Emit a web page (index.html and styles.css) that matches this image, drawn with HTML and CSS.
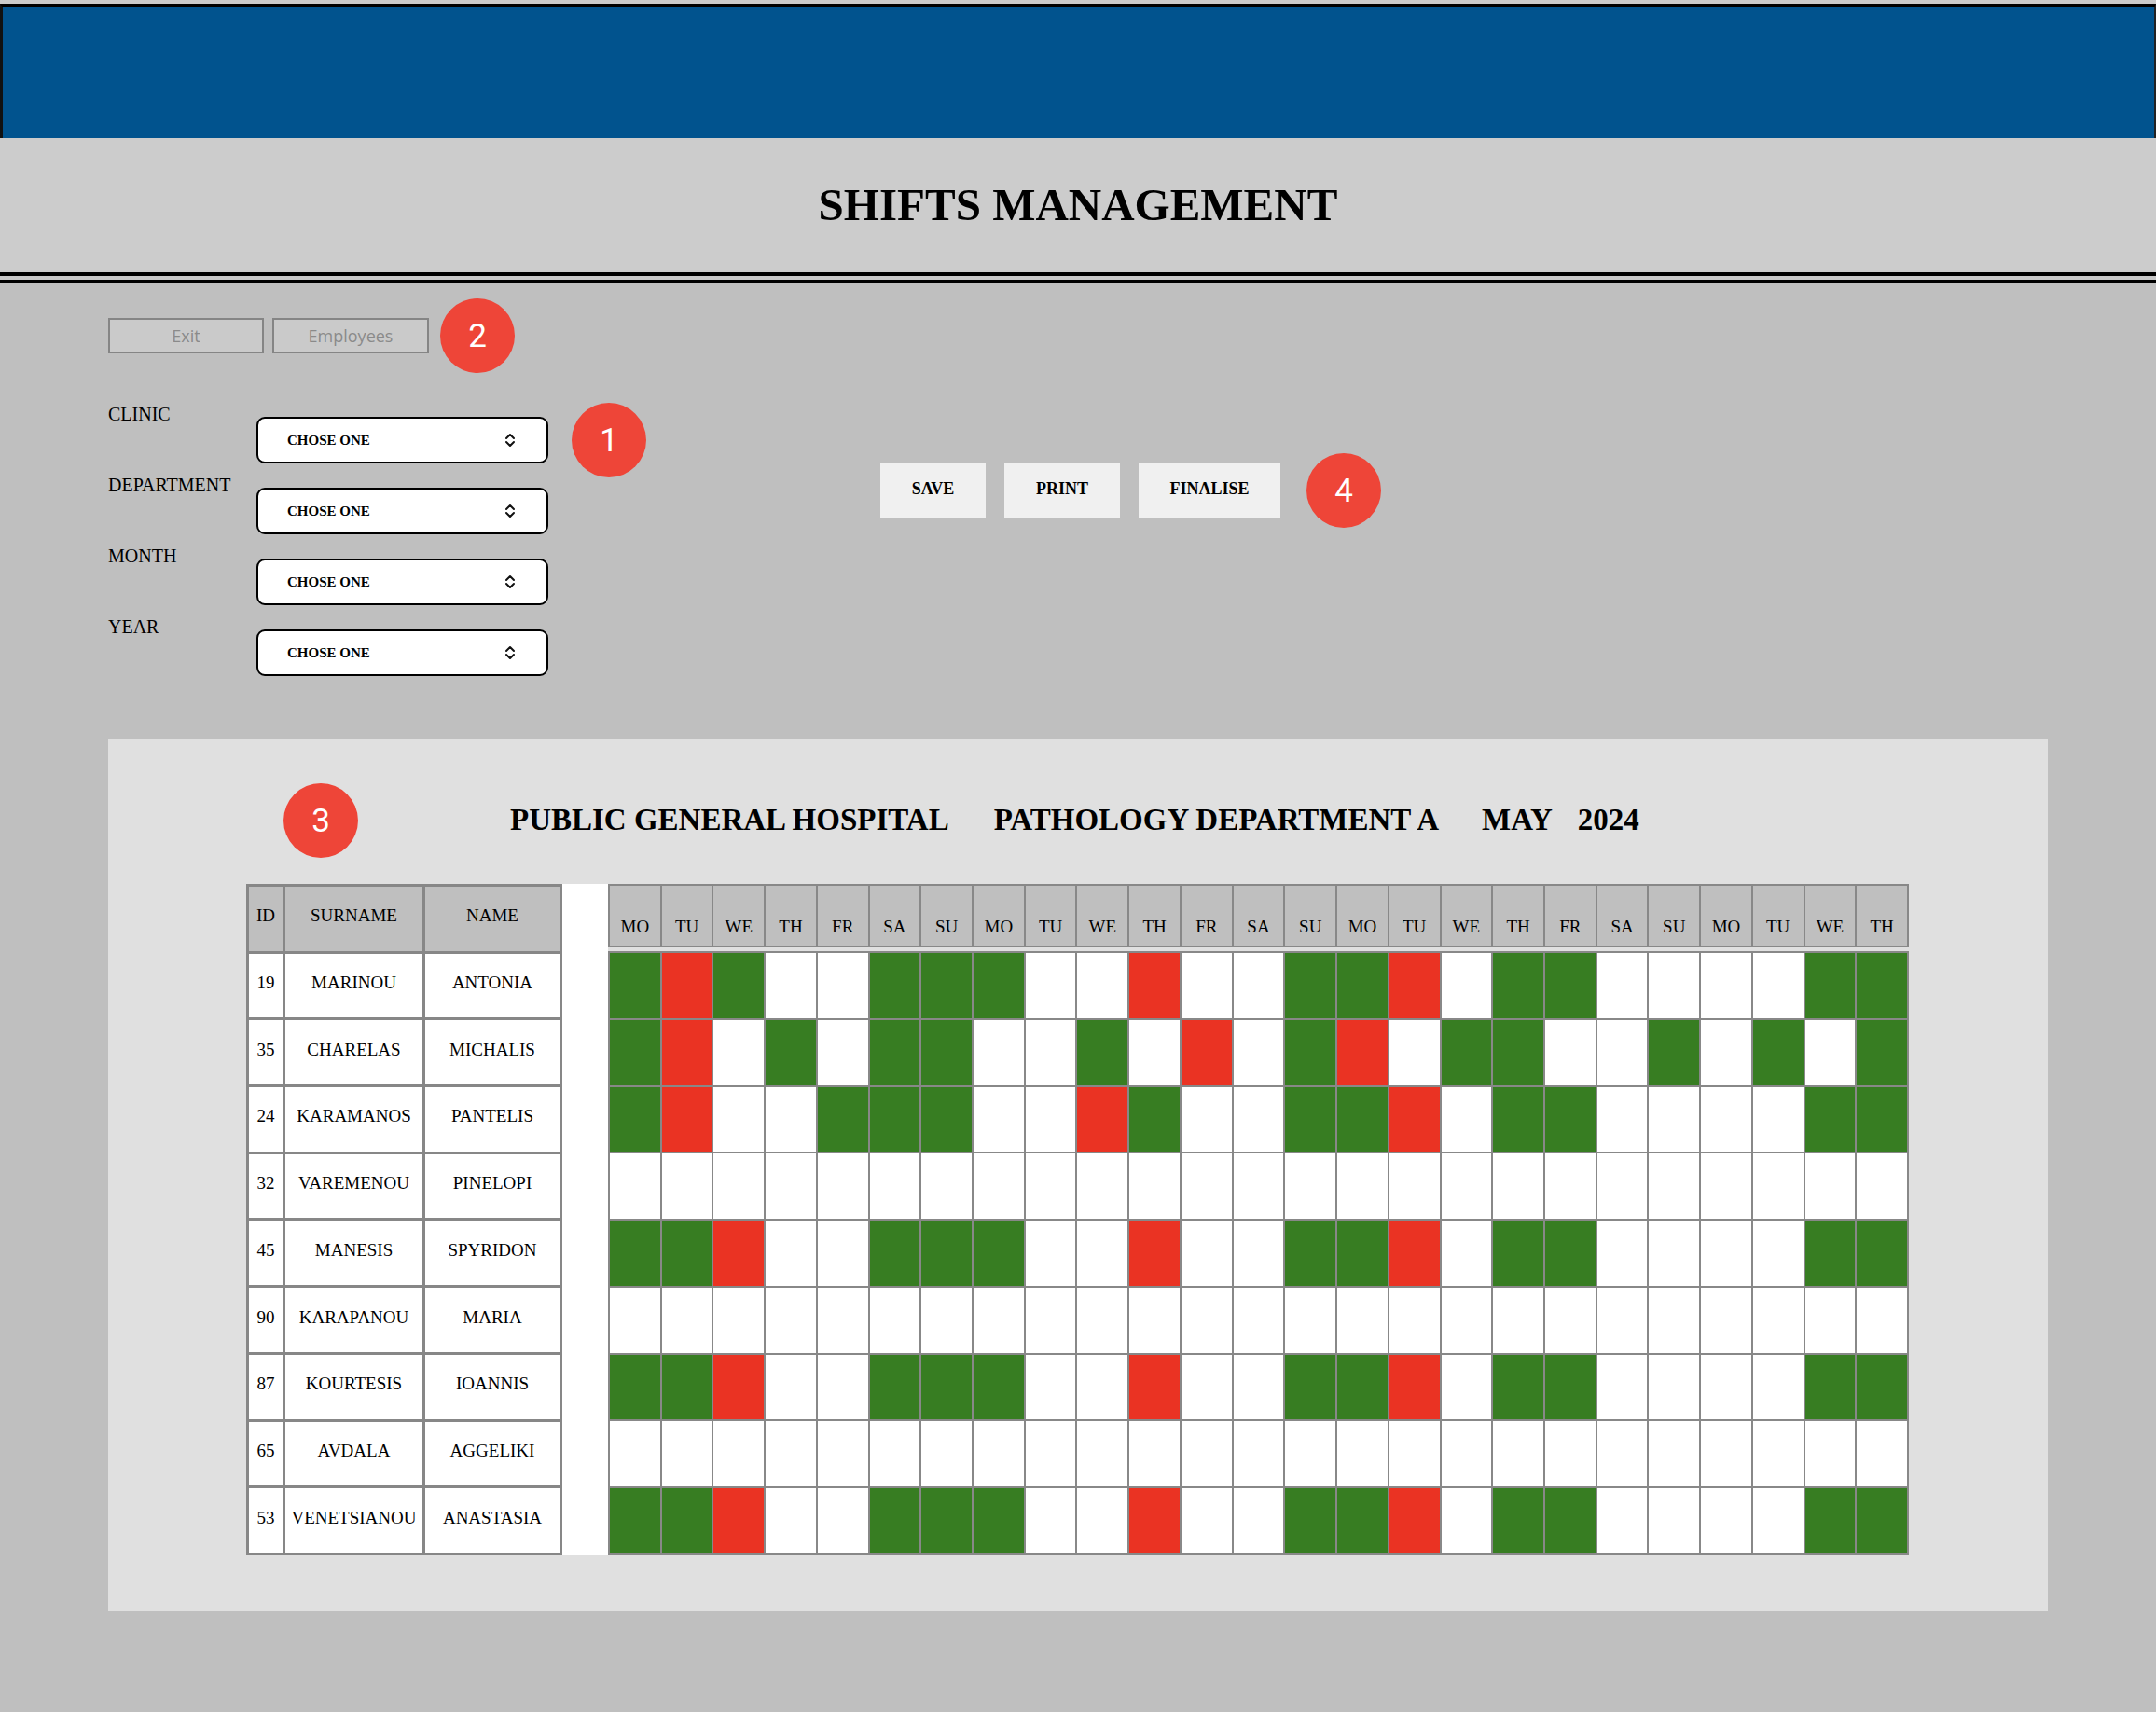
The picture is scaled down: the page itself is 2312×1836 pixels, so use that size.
FILE: index.html
```html
<!DOCTYPE html>
<html lang="en">
<head>
<meta charset="utf-8">
<title>Shifts Management</title>
<link rel="stylesheet" href="styles.css">
</head>
<body>
<header class="topbar"><div class="blue"></div></header>
<div class="titleband"><h1>SHIFTS MANAGEMENT</h1></div>
<div class="rule"></div>

<main class="controls">
  <div class="navrow">
    <button class="ghost exit">Exit</button>
    <button class="ghost emp">Employees</button>
    <span class="badge nav-badge">2</span>
  </div>

  <div class="formarea">
    <div class="form">
      <div class="frow">
        <label class="flabel">CLINIC</label>
        <div class="select"><span>CHOSE ONE</span><svg class="chev" viewBox="0 0 14 18" width="14" height="18"><path d="M3 7 L7 3 L11 7 M3 11 L7 15 L11 11"/></svg></div>
        <span class="badge form-badge">1</span>
      </div>
      <div class="frow">
        <label class="flabel">DEPARTMENT</label>
        <div class="select"><span>CHOSE ONE</span><svg class="chev" viewBox="0 0 14 18" width="14" height="18"><path d="M3 7 L7 3 L11 7 M3 11 L7 15 L11 11"/></svg></div>
      </div>
      <div class="frow">
        <label class="flabel">MONTH</label>
        <div class="select"><span>CHOSE ONE</span><svg class="chev" viewBox="0 0 14 18" width="14" height="18"><path d="M3 7 L7 3 L11 7 M3 11 L7 15 L11 11"/></svg></div>
      </div>
      <div class="frow">
        <label class="flabel">YEAR</label>
        <div class="select"><span>CHOSE ONE</span><svg class="chev" viewBox="0 0 14 18" width="14" height="18"><path d="M3 7 L7 3 L11 7 M3 11 L7 15 L11 11"/></svg></div>
      </div>
    </div>

    <div class="actions">
      <button class="act save">SAVE</button>
      <button class="act print">PRINT</button>
      <button class="act fin">FINALISE</button>
      <span class="badge act-badge">4</span>
    </div>
  </div>
</main>

<section class="panel">
  <div class="ptitle">
    <span class="badge panel-badge">3</span>
    <h2 class="heading"><span>PUBLIC GENERAL HOSPITAL</span><span class="h2">PATHOLOGY DEPARTMENT A</span><span class="h3">MAY</span><span class="h4">2024</span></h2>
  </div>

  <div class="tables">
    <div class="emps">
      <div class="th">ID</div><div class="th">SURNAME</div><div class="th">NAME</div>
      <div>19</div><div>MARINOU</div><div>ANTONIA</div>
      <div>35</div><div>CHARELAS</div><div>MICHALIS</div>
      <div>24</div><div>KARAMANOS</div><div>PANTELIS</div>
      <div>32</div><div>VAREMENOU</div><div>PINELOPI</div>
      <div>45</div><div>MANESIS</div><div>SPYRIDON</div>
      <div>90</div><div>KARAPANOU</div><div>MARIA</div>
      <div>87</div><div>KOURTESIS</div><div>IOANNIS</div>
      <div>65</div><div>AVDALA</div><div>AGGELIKI</div>
      <div>53</div><div>VENETSIANOU</div><div>ANASTASIA</div>
    </div>
    <div class="spacer"></div>
    <div class="cal">
      <div class="days">
        <div>MO</div><div>TU</div><div>WE</div><div>TH</div><div>FR</div><div>SA</div><div>SU</div>
        <div>MO</div><div>TU</div><div>WE</div><div>TH</div><div>FR</div><div>SA</div><div>SU</div>
        <div>MO</div><div>TU</div><div>WE</div><div>TH</div><div>FR</div><div>SA</div><div>SU</div>
        <div>MO</div><div>TU</div><div>WE</div><div>TH</div>
      </div>
      <div class="cells">
        <!-- 19 -->
        <i class="g"></i><i class="r"></i><i class="g"></i><i></i><i></i><i class="g"></i><i class="g"></i><i class="g"></i><i></i><i></i><i class="r"></i><i></i><i></i><i class="g"></i><i class="g"></i><i class="r"></i><i></i><i class="g"></i><i class="g"></i><i></i><i></i><i></i><i></i><i class="g"></i><i class="g"></i>
        <!-- 35 -->
        <i class="g"></i><i class="r"></i><i></i><i class="g"></i><i></i><i class="g"></i><i class="g"></i><i></i><i></i><i class="g"></i><i></i><i class="r"></i><i></i><i class="g"></i><i class="r"></i><i></i><i class="g"></i><i class="g"></i><i></i><i></i><i class="g"></i><i></i><i class="g"></i><i></i><i class="g"></i>
        <!-- 24 -->
        <i class="g"></i><i class="r"></i><i></i><i></i><i class="g"></i><i class="g"></i><i class="g"></i><i></i><i></i><i class="r"></i><i class="g"></i><i></i><i></i><i class="g"></i><i class="g"></i><i class="r"></i><i></i><i class="g"></i><i class="g"></i><i></i><i></i><i></i><i></i><i class="g"></i><i class="g"></i>
        <!-- 32 -->
        <i></i><i></i><i></i><i></i><i></i><i></i><i></i><i></i><i></i><i></i><i></i><i></i><i></i><i></i><i></i><i></i><i></i><i></i><i></i><i></i><i></i><i></i><i></i><i></i><i></i>
        <!-- 45 -->
        <i class="g"></i><i class="g"></i><i class="r"></i><i></i><i></i><i class="g"></i><i class="g"></i><i class="g"></i><i></i><i></i><i class="r"></i><i></i><i></i><i class="g"></i><i class="g"></i><i class="r"></i><i></i><i class="g"></i><i class="g"></i><i></i><i></i><i></i><i></i><i class="g"></i><i class="g"></i>
        <!-- 90 -->
        <i></i><i></i><i></i><i></i><i></i><i></i><i></i><i></i><i></i><i></i><i></i><i></i><i></i><i></i><i></i><i></i><i></i><i></i><i></i><i></i><i></i><i></i><i></i><i></i><i></i>
        <!-- 87 -->
        <i class="g"></i><i class="g"></i><i class="r"></i><i></i><i></i><i class="g"></i><i class="g"></i><i class="g"></i><i></i><i></i><i class="r"></i><i></i><i></i><i class="g"></i><i class="g"></i><i class="r"></i><i></i><i class="g"></i><i class="g"></i><i></i><i></i><i></i><i></i><i class="g"></i><i class="g"></i>
        <!-- 65 -->
        <i></i><i></i><i></i><i></i><i></i><i></i><i></i><i></i><i></i><i></i><i></i><i></i><i></i><i></i><i></i><i></i><i></i><i></i><i></i><i></i><i></i><i></i><i></i><i></i><i></i>
        <!-- 53 -->
        <i class="g"></i><i class="g"></i><i class="r"></i><i></i><i></i><i class="g"></i><i class="g"></i><i class="g"></i><i></i><i></i><i class="r"></i><i></i><i></i><i class="g"></i><i class="g"></i><i class="r"></i><i></i><i class="g"></i><i class="g"></i><i></i><i></i><i></i><i></i><i class="g"></i><i class="g"></i>
      </div>
    </div>
  </div>
</section>
</body>
</html>
```

FILE: styles.css
```css
* { box-sizing: border-box; }

html, body {
  margin: 0;
  padding: 0;
}

body {
  width: 2312px;
  min-height: 1836px;
  background: #bfbfbf;
  font-family: "Liberation Serif", "Times New Roman", serif;
  color: #000;
}

/* header */
.topbar {
  background: #cbcbcb;
  padding-top: 4px;
}
.blue {
  height: 144px;
  background: #01538e;
  border-top: 4px solid #000;
  border-left: 3px solid #111;
  border-right: 2px solid #222;
}

.titleband {
  height: 144px;
  background: #cccccc;
  display: flex;
  align-items: center;
  justify-content: center;
}
.titleband h1 {
  margin: 0;
  font-size: 49px;
  font-weight: 700;
  line-height: 1.15;
  letter-spacing: 0;
}

.rule {
  height: 12px;
  background: #c8c8c8;
  border-top: 4px solid #000;
  border-bottom: 4px solid #000;
}

/* badges */
.badge {
  flex: none;
  width: 80px;
  height: 80px;
  border-radius: 50%;
  background: #ee4538;
  color: #fff;
  font-family: Roboto, "Liberation Sans", sans-serif;
  font-size: 35px;
  font-weight: 400;
  display: flex;
  align-items: center;
  justify-content: center;
}

/* controls */
.controls {
  padding: 16px 116px 0;
}

.navrow {
  display: flex;
  align-items: center;
  height: 80px;
}
.ghost {
  height: 38px;
  background: #cacaca;
  border: 2px solid #858585;
  color: #8a8a8a;
  font-family: "Open Sans", "Liberation Sans", sans-serif;
  font-size: 18px;
  line-height: 1;
  padding: 0;
}
.exit { width: 167px; }
.emp { width: 168px; margin-left: 9px; }
.nav-badge { margin-left: 12px; }

.formarea {
  display: flex;
  align-items: flex-start;
  margin-top: 33px;
}

.form {
  display: flex;
  flex-direction: column;
  gap: 12px;
}
.frow {
  display: flex;
  align-items: flex-start;
  height: 64px;
}
.flabel {
  width: 159px;
  font-size: 20px;
  line-height: 23px;
}
.select {
  margin-top: 14px;
  width: 313px;
  height: 50px;
  background: #fff;
  border: 2px solid #000;
  border-radius: 9px;
  display: flex;
  align-items: center;
  justify-content: space-between;
  padding: 0 32px 0 31px;
  font-size: 15px;
  font-weight: 700;
}
.chev path {
  fill: none;
  stroke: #111;
  stroke-width: 2;
  stroke-linecap: round;
  stroke-linejoin: round;
}
.form-badge {
  margin-left: 25px;
  margin-top: -1px;
}

.actions {
  display: flex;
  align-items: center;
  gap: 20px;
  margin-left: 251px;
  margin-top: 53px;
}
.act {
  height: 60px;
  background: #f0f0f0;
  border: none;
  padding: 0 0 3px;
  font-family: "Liberation Serif", "Times New Roman", serif;
  font-size: 18px;
  font-weight: 700;
  color: #000;
}
.save { width: 113px; }
.print { width: 124px; }
.fin { width: 152px; }
.act-badge { margin-left: 8px; }

/* panel */
.panel {
  margin: 67px 116px 0;
  height: 936px;
  background: #e0e0e0;
  padding: 48px 0 0 148px;
}

.ptitle {
  display: flex;
  align-items: center;
  height: 80px;
}
.panel-badge { margin-left: 40px; }
.heading {
  margin: 0 0 0 163px;
  display: flex;
  font-size: 33px;
  font-weight: 700;
  line-height: 1.15;
}
.heading .h2 { margin-left: 48px; }
.heading .h3 { margin-left: 46px; }
.heading .h4 { margin-left: 27px; }

.tables {
  margin-top: 28px;
  display: flex;
  align-items: flex-start;
}

.emps {
  width: 339px;
  height: 720px;
  display: grid;
  grid-template-columns: 36px 147px 144px;
  grid-template-rows: repeat(10, 1fr);
  gap: 3px;
  padding: 3px;
  background: #878787;
}
.emps > div {
  background: #fff;
  display: flex;
  align-items: center;
  justify-content: center;
  font-size: 19px;
  padding-bottom: 6px;
  white-space: nowrap;
}
.emps > .th {
  background: #bfbfbf;
}

.spacer {
  width: 49px;
  height: 720px;
  background: #fff;
}

.cal {
  width: 1395px;
}
.days {
  height: 68px;
  display: grid;
  grid-template-columns: repeat(25, 1fr);
  gap: 2px;
  padding: 2px;
  background: #888;
}
.days > div {
  background: #bfbfbf;
  display: flex;
  align-items: flex-end;
  justify-content: center;
  padding-bottom: 9px;
  font-size: 19px;
  line-height: 22px;
}
.cells {
  margin-top: 4px;
  height: 648px;
  display: grid;
  grid-template-columns: repeat(25, 1fr);
  grid-template-rows: repeat(9, 1fr);
  gap: 2px;
  padding: 2px;
  background: #888;
}
.cells > i {
  display: block;
  background: #fff;
}
.cells > i.g { background: #377d22; }
.cells > i.r { background: #ea3323; }
```
